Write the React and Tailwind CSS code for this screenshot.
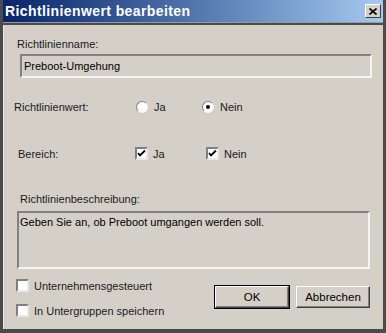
import { useState } from 'react';

function Radio({ checked }) {
  return (
    <span className="relative inline-block w-[12px] h-[12px] rounded-full bg-white border border-t-[#808080] border-l-[#808080] border-b-[#f0f0f0] border-r-[#f0f0f0]">
      {checked && <span className="absolute left-[3px] top-[3px] w-[4px] h-[4px] rounded-full bg-black" />}
    </span>
  );
}

function Check({ checked }) {
  return (
    <span className="inline-flex items-center justify-center w-[13px] h-[13px] bg-white border-2 border-t-[#808080] border-l-[#808080] border-b-[#e8e8e8] border-r-[#e8e8e8]">
      {checked && (
        <svg width="9" height="9" viewBox="0 0 9 9">
          <path d="M1 4 L3 6.5 L8 1.5" stroke="#000" strokeWidth="1.8" fill="none" />
        </svg>
      )}
    </span>
  );
}

function Button({ children, isDefault }) {
  return (
    <div className={isDefault ? 'border border-black' : 'border border-transparent'}>
      <button className="w-[74px] h-[22px] bg-[#d4d0c8] border border-t-white border-l-white border-b-[#404040] border-r-[#404040] shadow-[inset_-1px_-1px_0_#808080] text-[11.5px] text-black">
        {children}
      </button>
    </div>
  );
}

export default function App() {
  const [value] = useState('nein');

  return (
    <div className="w-[386px] h-[333px] bg-[#4b4b4b] px-[3px] pb-[4px] flex flex-col" style={{ fontFamily: '"Liberation Sans", Arial, sans-serif' }}>
      {/* Title bar */}
      <div className="h-[22px] flex items-center justify-between bg-gradient-to-r from-[#0a246a] to-[#a6caf0] pl-[2px] pr-[2px]">
        <span className="text-white font-bold text-[14px] tracking-[0.4px]">Richtlinienwert bearbeiten</span>
        <span className="w-[16px] h-[14px] bg-[#d4d0c8] border border-t-white border-l-white border-b-[#404040] border-r-[#404040] flex items-center justify-center">
          <svg width="8" height="7" viewBox="0 0 8 7">
            <path d="M0.5 0.5 L7.5 6.5 M7.5 0.5 L0.5 6.5" stroke="#000" strokeWidth="1.6" />
          </svg>
        </span>
      </div>
      <div className="h-[1px] bg-[#9a9a9a]" />
      <div className="h-[2px] bg-[#4b4b4b]" />

      {/* Body */}
      <div className="flex-1 bg-[#d4d0c8] border-l border-[#e8e8e8] text-[11px] text-[#1a1a1a] leading-[12px] flex flex-col">
        <div className="ml-[13px] mt-[13px]">Richtlinienname:</div>
        <div className="ml-[16px] mt-[4px] w-[352px] h-[24px] border-2 border-t-[#808080] border-l-[#808080] border-b-[#f4f4f4] border-r-[#f4f4f4] flex items-center px-[2px] text-black">
          Preboot-Umgehung
        </div>

        <div className="mt-[23px] flex items-center">
          <span className="ml-[10px] w-[122px]">Richtlinienwert:</span>
          <Radio checked={value === 'ja'} />
          <span className="ml-[6px] w-[48px]">Ja</span>
          <Radio checked={value === 'nein'} />
          <span className="ml-[6px]">Nein</span>
        </div>

        <div className="mt-[34px] flex items-center">
          <span className="ml-[14px] w-[117px]">Bereich:</span>
          <Check checked />
          <span className="ml-[5px] w-[53px]">Ja</span>
          <Check checked />
          <span className="ml-[5px]">Nein</span>
        </div>

        <div className="ml-[16px] mt-[33px]">Richtlinienbeschreibung:</div>
        <div className="ml-[13px] mt-[6px] w-[353px] h-[58px] border-2 border-t-[#808080] border-l-[#808080] border-b-[#f4f4f4] border-r-[#f4f4f4] px-[1px] pt-[3px] text-black">
          Geben Sie an, ob Preboot umgangen werden soll.
        </div>

        <div className="mt-[9px] flex justify-between pr-[12px]">
          <div className="ml-[12px] flex flex-col gap-[12px] pt-[1px]">
            <div className="flex items-center">
              <Check />
              <span className="ml-[5px]">Unternehmensgesteuert</span>
            </div>
            <div className="flex items-center">
              <Check />
              <span className="ml-[5px]">In Untergruppen speichern</span>
            </div>
          </div>
          <div className="flex gap-[5px] mt-[7px] items-start">
            <Button isDefault>OK</Button>
            <Button>Abbrechen</Button>
          </div>
        </div>
      </div>
    </div>
  );
}
